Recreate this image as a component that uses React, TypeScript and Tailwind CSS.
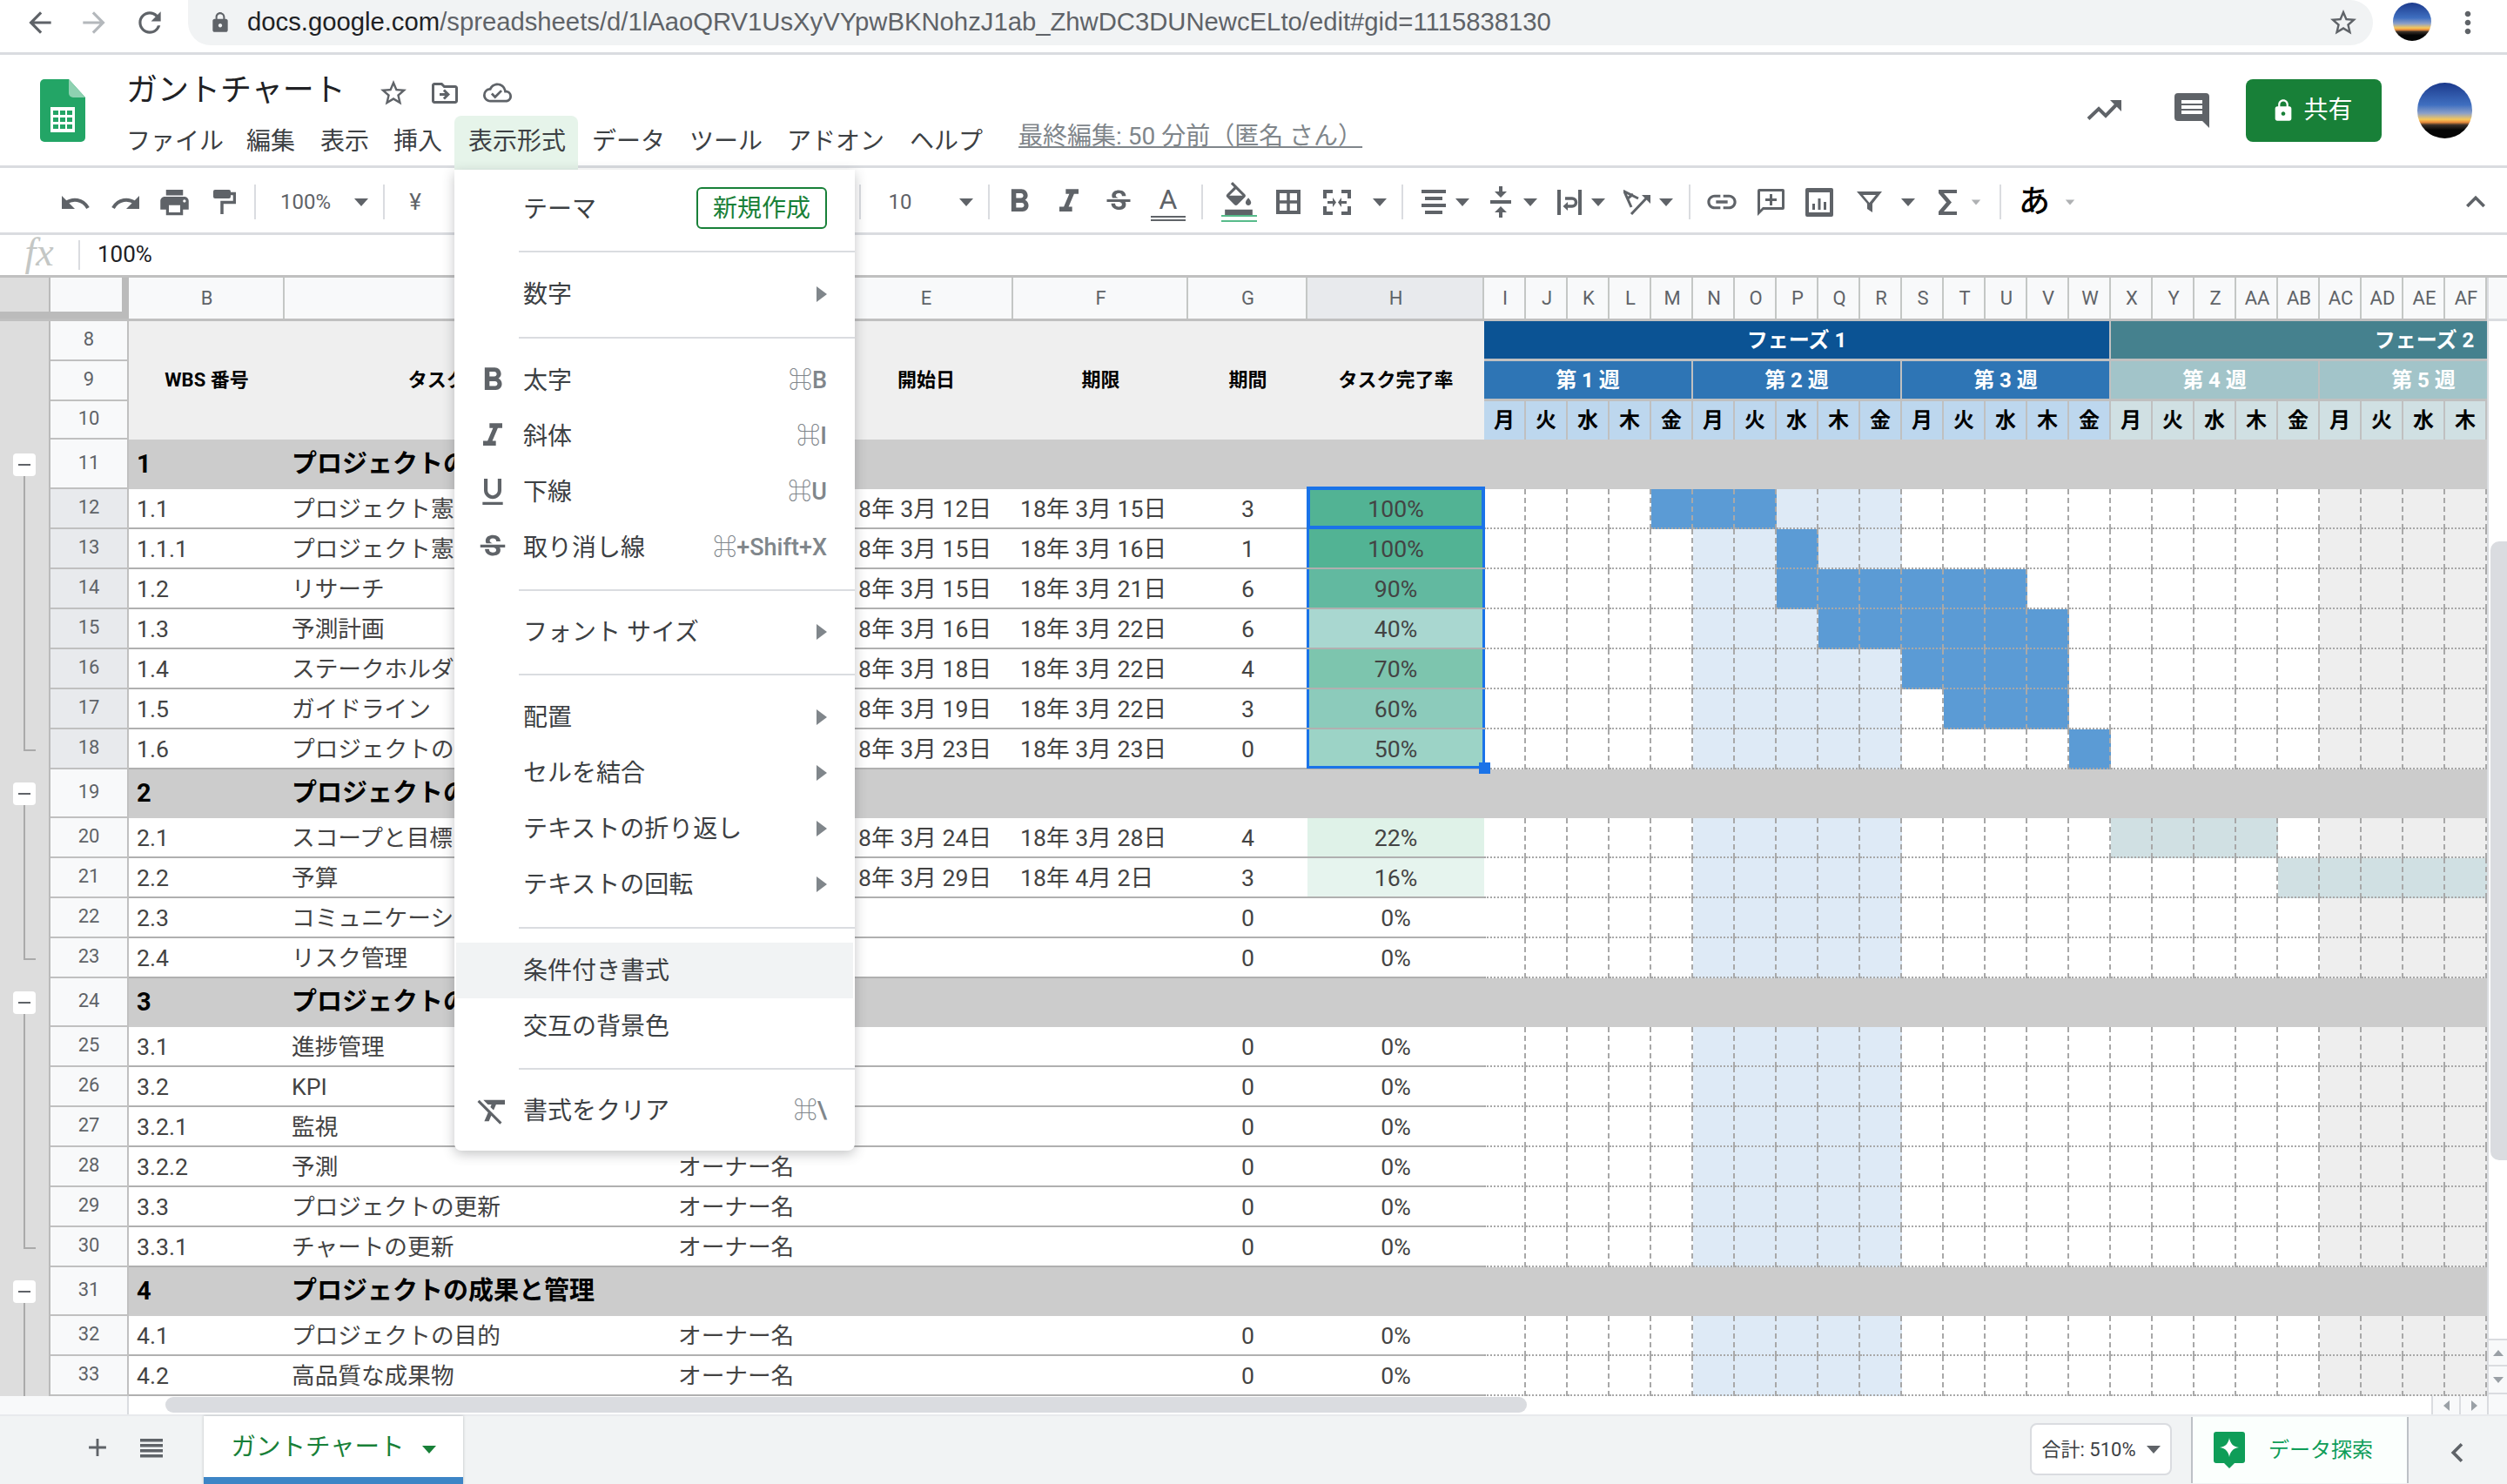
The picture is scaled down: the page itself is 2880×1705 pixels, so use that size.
import React from "react";
import {
  MdArrowBack, MdArrowForward, MdRefresh, MdStarBorder, MdLock, MdMoreVert, MdOutlineDriveFileMove, MdOutlineCloudDone,
  MdPrint, MdFormatBold, MdFormatItalic, MdStrikethroughS,
  MdFormatColorFill, MdLink, MdExpandLess, MdFormatClear, MdAdd, MdChevronLeft, MdFormatUnderlined,
} from "react-icons/md";

const AVATAR = "bg-[linear-gradient(180deg,#1c3a8c_0%,#3f6fc0_40%,#8ca0c8_55%,#f7c85a_66%,#e98c3c_71%,#3a3028_76%,#050505_85%)]";
const GREY = "#5f6368";

function TriDown({ cls = "" }: { cls?: string }) {
  return <span className={"block w-0 h-0 border-x-[8px] border-t-[9px] border-x-transparent border-t-[#5f6368] " + cls} />;
}
function TriRight() {
  return <span className="block w-0 h-0 border-y-[9px] border-l-[12px] border-y-transparent border-l-[#80868b]" />;
}

function Sep({ cls }: { cls: string }) {
  return <div className={"w-[2px] h-[40px] bg-[#dadce0] " + cls} />;
}

function Arrow({ cls, light }: { cls: string; light?: boolean }) {
  return (
    <div className={"w-[18px] flex justify-center " + cls}>
      <TriDown cls={light ? "opacity-50 scale-[0.65]" : ""} />
    </div>
  );
}

function Browser() {
  return (
    <div className="h-[63px] border-b-[3px] border-[#dadce0] bg-white flex items-start">
      <div className="w-[216px] h-[52px] flex items-center text-[#5f6368]">
        <MdArrowBack className="ml-[27px] w-[38px] h-[38px]" />
        <MdArrowForward className="ml-[24px] w-[38px] h-[38px] text-[#b4b8bc]" />
        <MdRefresh className="ml-[26px] w-[38px] h-[38px]" />
      </div>
      <div className="w-[2510px] h-[52px] bg-[#f1f3f4] rounded-r-[26px] rounded-bl-[26px] flex items-center">
        <MdLock className="ml-[24px] w-[26px] h-[26px] text-[#5f6368]" />
        <div className="ml-[18px] text-[29.25px] [font-family:'Liberation_Sans',sans-serif] text-[#5f6368] whitespace-nowrap">
          <span className="text-[#202124]">docs.google.com</span>/spreadsheets/d/1lAaoQRV1UsXyVYpwBKNohzJ1ab_ZhwDC3DUNewcELto/edit#gid=1115838130
        </div>
        <MdStarBorder className="ml-auto mr-[16px] w-[36px] h-[36px] text-[#5f6368]" />
      </div>
      <div className={"ml-[23px] mt-[3px] w-[44px] h-[44px] rounded-full " + AVATAR} />
      <MdMoreVert className="ml-[22px] mt-[6px] w-[40px] h-[40px] text-[#5f6368]" />
    </div>
  );
}

function Logo() {
  return (
    <svg viewBox="0 0 52 72" className="w-[52px] h-[72px] block">
      <path d="M5 0H33L52 21V67a5 5 0 0 1-5 5H5a5 5 0 0 1-5-5V5a5 5 0 0 1 5-5z" fill="#23a566" />
      <path d="M33 0L52 21H38a5 5 0 0 1-5-5z" fill="#8ed1b1" />
      <rect x="12" y="32" width="28" height="29" fill="#fff" />
      <g fill="#23a566">
        <rect x="15" y="36" width="6" height="5" /><rect x="23" y="36" width="6" height="5" /><rect x="31" y="36" width="6" height="5" />
        <rect x="15" y="44" width="6" height="5" /><rect x="23" y="44" width="6" height="5" /><rect x="31" y="44" width="6" height="5" />
        <rect x="15" y="52" width="6" height="5" /><rect x="23" y="52" width="6" height="5" /><rect x="31" y="52" width="6" height="5" />
      </g>
    </svg>
  );
}

const MENU_BAR = [
  { t: "ファイル", w: "w-[138px]" },
  { t: "編集", w: "w-[85px]" },
  { t: "表示", w: "w-[84px]" },
  { t: "挿入", w: "w-[86px]" },
  { t: "表示形式", w: "w-[142px] bg-[#e6f4ea] rounded-t-[8px]" },
  { t: "データ", w: "w-[112px]" },
  { t: "ツール", w: "w-[112px]" },
  { t: "アドオン", w: "w-[141px]" },
  { t: "ヘルプ", w: "w-[121px]" },
];

function DocHeader() {
  return (
    <div className="h-[130px] bg-white border-b-[3px] border-[#dadce0] flex relative">
      <div className="ml-[46px] mt-[28px] shrink-0"><Logo /></div>
      <div className="ml-[47px] flex flex-col">
        <div className="h-[70px] shrink-0 flex items-center pt-[11px]">
          <span className="text-[36px] text-[#202124] leading-none">ガントチャート</span>
          <MdStarBorder className="ml-[37px] mt-[6px] w-[36px] h-[36px] text-[#5f6368]" />
          <MdOutlineDriveFileMove className="ml-[23px] mt-[6px] w-[36px] h-[36px] text-[#5f6368]" />
          <MdOutlineCloudDone className="ml-[26px] mt-[6px] w-[33px] h-[33px] text-[#5f6368]" />
        </div>
        <div className="-ml-[16px] flex items-center h-[62px] shrink-0 relative z-0">
          {MENU_BAR.map((m) => (
            <div key={m.t} className={"h-[62px] pl-[16px] pb-[2px] flex items-center text-[28px] text-[#3c4043] whitespace-nowrap " + m.w}>
              {m.t}
            </div>
          ))}
          <div className="ml-[20px] -mt-[14px] text-[28px] leading-[36px] text-[#80868b] underline whitespace-nowrap">最終編集: 50 分前（匿名 さん）</div>
        </div>
      </div>
      <div className="ml-auto flex items-start shrink-0">
        <svg viewBox="0 0 40 23" className="mt-[52px] w-[40px] h-[23px]" fill="none">
          <path d="M2 21.5L14 10l8 8L36 3.5" stroke={GREY} strokeWidth="4" />
          <path d="M40 0V13L27 0z" fill={GREY} />
        </svg>
        <svg viewBox="0 0 40 40" className="ml-[61px] mt-[44px] w-[40px] h-[40px]">
          <path d="M4 0h32a4 4 0 0 1 4 4v36l-8-8H4a4 4 0 0 1-4-4V4a4 4 0 0 1 4-4z" fill={GREY} />
          <path d="M8 8h24v4H8zM8 14h24v4H8zM8 20h24v4H8z" fill="#fff" />
        </svg>
        <div className="ml-[42px] mt-[28px] w-[156px] h-[72px] bg-[#188038] rounded-[8px] flex items-center justify-center text-white text-[28px] pr-[4px]">
          <MdLock className="w-[28px] h-[28px] mr-[9px]" />共有
        </div>
        <div className={"ml-[41px] mr-[40px] mt-[32px] w-[63px] h-[64px] rounded-full " + AVATAR} />
      </div>
    </div>
  );
}

function Toolbar() {
  const slot = "flex justify-center items-center text-[#5f6368] ";
  return (
    <div className="h-[77px] pt-[4px] bg-white border-b-[3px] border-[#dadce0] flex items-center">
      <div className={slot + "ml-[58px] w-[57px]"}>
        <svg viewBox="0 0 32 15" className="w-[32px] h-[15px]" fill="none">
          <path d="M0 0V15H15z" fill={GREY} />
          <path d="M5 8C12 3 24 3 30 14" stroke={GREY} strokeWidth="4" />
        </svg>
      </div>
      <div className={slot + "w-[57px]"}>
        <svg viewBox="0 0 32 15" className="w-[32px] h-[15px]" fill="none">
          <path d="M32 0V15H17z" fill={GREY} />
          <path d="M27 8C20 3 8 3 2 14" stroke={GREY} strokeWidth="4" />
        </svg>
      </div>
      <div className={slot + "w-[57px]"}><MdPrint className="w-[39px] h-[39px]" /></div>
      <div className={slot + "w-[57px]"}>
        <svg viewBox="0 0 26 28" className="w-[26px] h-[28px]" fill="none">
          <rect width="20" height="10" rx="2" fill={GREY} />
          <path d="M20 4.5H24.5V14.5H10V28" stroke={GREY} strokeWidth="3.5" />
        </svg>
      </div>
      <Sep cls="ml-[6px]" />
      <div className={slot + "w-[114px] text-[24px]"}>100%</div>
      <Arrow cls="-ml-[2px]" />
      <Sep cls="ml-[16px]" />
      <div className={slot + "w-[70px] text-[26px]"}>¥</div>
      <Sep cls="ml-[475px]" />
      <div className={slot + "w-[90px] text-[24px] text-[#5f6368]"}>10</div>
      <Arrow cls="ml-[22px]" />
      <Sep cls="ml-[16px]" />
      <div className={slot + "w-[68px]"}><MdFormatBold className="w-[44px] h-[44px]" /></div>
      <div className={slot + "w-[46px]"}><MdFormatItalic className="w-[44px] h-[44px]" /></div>
      <div className={slot + "w-[68px]"}><MdStrikethroughS className="w-[36px] h-[36px]" /></div>
      <div className={"w-[46px] flex flex-col items-center text-[#5f6368]"}>
        <span className="text-[32px] leading-[38px]">A</span>
        <span className="w-[40px] h-[6px] border-y-2 border-[#5f6368]" />
      </div>
      <Sep cls="ml-[15px]" />
      <div className="w-[82px] flex flex-col items-center">
        <MdFormatColorFill className="w-[38px] h-[38px] text-[#5f6368]" />
        <span className="w-[41px] h-[8px] border-y-2 border-[#57bb8a]" />
      </div>
      <div className={slot + "w-[32px]"}>
        <svg viewBox="0 0 28 28" className="w-[28px] h-[28px]" fill="none" stroke={GREY}>
          <rect x="2" y="2" width="24" height="24" strokeWidth="4" />
          <path d="M14 2V26M2 14H26" strokeWidth="3.5" />
        </svg>
      </div>
      <div className={slot + "w-[80px]"}>
        <svg viewBox="0 0 32 29" className="w-[32px] h-[29px]" fill={GREY}>
          <path d="M0 0h11v4H4v6H0zM21 0h11v10h-4V4h-7zM0 19h4v6h7v4H0zM28 19h4v10H21v-4h7zM5 13h6V9l4 5.5-4 5.5v-4H5zM27 13h-6V9l-4 5.5 4 5.5v-4h6z" />
        </svg>
      </div>
      <Arrow cls="" />
      <Sep cls="ml-[16px]" />
      <div className={slot + "ml-[19px] w-[32px]"}>
        <svg viewBox="0 0 28 28" className="w-[28px] h-[28px]" fill={GREY}>
          <path d="M0 0h28v4H0zM4 8h20v4H4zM0 16h28v4H0zM4 24h20v4H4z" />
        </svg>
      </div>
      <Arrow cls="ml-[8px]" />
      <div className={slot + "ml-[19px] w-[32px]"}>
        <svg viewBox="0 0 24 36" className="w-[24px] h-[36px]" fill={GREY}>
          <path d="M10 0h4v6h5l-7 7-7-7h5zM0 16h24v4H0zM12 23l7 7h-5v6h-4v-6H5z" />
        </svg>
      </div>
      <Arrow cls="ml-[9px]" />
      <div className={slot + "ml-[20px] w-[32px]"}>
        <svg viewBox="0 0 28 29" className="w-[28px] h-[29px]" fill="none">
          <path d="M0 0h4v29H0zM24 0h4v29h-4z" fill={GREY} />
          <path d="M9 10h8a4.5 4.5 0 0 1 0 9h-6" stroke={GREY} strokeWidth="3.5" />
          <path d="M12 14l-5.5 5 5.5 5z" fill={GREY} />
        </svg>
      </div>
      <Arrow cls="ml-[8px]" />
      <div className={slot + "ml-[19px] w-[32px]"}>
        <svg viewBox="0 0 31 29" className="w-[31px] h-[29px]" fill="none" stroke={GREY} strokeWidth="3">
          <path d="M17 10L1 2L9 20M5 10L11 5M9 28L27 9" />
          <path d="M31 6H21l10 10z" fill={GREY} stroke="none" />
        </svg>
      </div>
      <Arrow cls="ml-[9px]" />
      <Sep cls="ml-[17px]" />
      <div className={slot + "ml-[16px] w-[40px]"}><MdLink className="w-[44px] h-[44px]" /></div>
      <div className={slot + "ml-[18px] w-[36px]"}>
        <svg viewBox="0 0 31 31" className="w-[31px] h-[31px]" fill={GREY}>
          <path fillRule="evenodd" d="M2 0h27a2 2 0 0 1 2 2v20a2 2 0 0 1-2 2H7l-7 7V2a2 2 0 0 1 2-2zM3 3v21l3-3h22V3z" />
          <path d="M14 6h3v5h5v3h-5v5h-3v-5H9v-3h5z" />
        </svg>
      </div>
      <div className={slot + "ml-[20px] w-[36px]"}>
        <svg viewBox="0 0 32 33" className="w-[32px] h-[33px]" fill={GREY}>
          <path fillRule="evenodd" d="M2 0h28a2 2 0 0 1 2 2v29a2 2 0 0 1-2 2H2a2 2 0 0 1-2-2V2a2 2 0 0 1 2-2zM4 5v23h24V5z" />
          <path d="M8 18h3v7H8zM14.5 12h3v13h-3zM21 16h3v9h-3z" />
        </svg>
      </div>
      <div className={slot + "ml-[21px] w-[36px]"}>
        <svg viewBox="0 0 29 24" className="w-[29px] h-[24px]" fill={GREY}>
          <path fillRule="evenodd" d="M0 0H29L18 14V24L12 20V14zM7 4L14.5 13L22 4z" />
        </svg>
      </div>
      <Arrow cls="ml-[18px]" />
      <div className={slot + "ml-[20px] w-[32px]"}>
        <svg viewBox="0 0 21 29" className="w-[21px] h-[29px]" fill={GREY}>
          <path d="M0 0h21v4H6l9 10.5L6 25h15v4H0v-4l9-10.5L0 4z" />
        </svg>
      </div>
      <Arrow cls="ml-[8px]" light />
      <Sep cls="ml-[18px]" />
      <div className="ml-[18px] w-[40px] text-center text-[36px] font-medium text-black leading-none">あ</div>
      <Arrow cls="ml-[12px]" light />
      <MdExpandLess className="ml-auto mr-[14px] w-[44px] h-[44px] text-[#5f6368]" />
    </div>
  );
}

function FormulaBar() {
  return (
    <div className="h-[49px] bg-white border-b-[3px] border-[#c0c0c0] flex items-center">
      <div className="w-[90px] pb-[6px] text-center text-[46px] italic text-[#c4c7c5] [font-family:'Liberation_Serif',serif] leading-none">fx</div>
      <div className="w-[2px] h-[34px] bg-[#dadce0]" />
      <div className="ml-[20px] pb-[2px] text-[26px] text-[#202124]">100%</div>
    </div>
  );
}

const colHead = "h-full pl-[2px] flex items-center justify-center border-r-2 border-[#c4c7c5] text-[22px] text-[#5f6368]";

function ColumnHeader() {
  const letters = "I J K L M N O P Q R S T U V W X Y Z AA AB AC AD AE AF".split(" ");
  return (
    <div className="h-[50px] flex bg-[#f8f9fa] border-b-[3px] border-[#c0c0c0]">
      <div className="w-[58px] bg-[#dddddd] border-r-2 border-[#bbbbbb] border-b-[8px] box-border" />
      <div className="w-[90px] border-r-[8px] border-b-[8px] border-[#bbbbbb]" />
      <div className={colHead + " w-[179px]"}>B</div>
      <div className={colHead + " w-[443px]"}>C</div>
      <div className={colHead + " w-[194px]"}>D</div>
      <div className={colHead + " w-[200px]"}>E</div>
      <div className={colHead + " w-[201px]"}>F</div>
      <div className={colHead + " w-[137px]"}>G</div>
      <div className={colHead + " w-[203px] bg-[#e8eaed]"}>H</div>
      {letters.map((l) => (
        <div key={l} className={colHead + " w-[48px]"}>{l}</div>
      ))}
    </div>
  );
}

type GutterKind = "none" | "box" | "line" | "end";

function Gutter({ kind }: { kind: GutterKind }) {
  return (
    <div className="w-[58px] shrink-0 h-full bg-[#dddddd] border-r-2 border-[#bbbbbb] relative">
      {kind === "box" && (
        <>
          <div className="absolute left-[27px] top-1/2 bottom-0 w-[2px] bg-[#aaaaaa]" />
          <div className="absolute left-[15px] top-1/2 -translate-y-1/2 w-[26px] h-[26px] bg-white rounded-[4px] flex items-center justify-center">
            <span className="w-[14px] h-[2px] bg-[#5f6368]" />
          </div>
        </>
      )}
      {kind === "line" && <div className="absolute left-[27px] top-0 bottom-0 w-[2px] bg-[#aaaaaa]" />}
      {kind === "end" && (
        <>
          <div className="absolute left-[27px] top-0 h-1/2 w-[2px] bg-[#aaaaaa]" />
          <div className="absolute left-[27px] top-1/2 w-[14px] h-[2px] bg-[#aaaaaa]" />
        </>
      )}
    </div>
  );
}

function RowNum({ n, active }: { n: number; active?: boolean }) {
  return (
    <div
      className={
        "w-[90px] shrink-0 h-full flex items-center justify-center text-[22px] text-[#5f6368] border-r-2 border-b-2 border-[#c0c0c0] pb-[3px] " +
        (active ? "bg-[#e8eaed]" : "bg-[#f8f9fa]")
      }
    >
      {n}
    </div>
  );
}

const DAYS = ["月", "火", "水", "木", "金"];

function GanttHeader() {
  const days = Array.from({ length: 24 }, (_, i) => DAYS[i % 5]);
  return (
    <div className="w-[1152px] shrink-0 flex flex-col overflow-hidden">
      <div className="h-[46px] flex text-white font-bold text-[24px]">
        <div className="w-[720px] shrink-0 bg-[#0b5394] border-r-2 border-b-[3px] border-[#c0c0c0] flex items-center justify-center">フェーズ 1</div>
        <div className="w-[720px] shrink-0 bg-[#45818e] border-b-[3px] border-[#c0c0c0] flex items-center justify-center">フェーズ 2</div>
      </div>
      <div className="h-[46px] flex text-white font-bold text-[24px]">
        {["第 1 週", "第 2 週", "第 3 週"].map((t) => (
          <div key={t} className="w-[240px] shrink-0 bg-[#2e75b5] border-r-2 border-b-[3px] border-[#c0c0c0] flex items-center justify-center">{t}</div>
        ))}
        {["第 4 週", "第 5 週"].map((t) => (
          <div key={t} className="w-[240px] shrink-0 bg-[#a2c4c9] border-r-2 border-b-[3px] border-[#c0c0c0] flex items-center justify-center">{t}</div>
        ))}
      </div>
      <div className="h-[44px] flex text-black font-bold text-[24px]">
        {days.map((d, i) => (
          <div
            key={i}
            className={
              "w-[48px] shrink-0 border-r-2 border-[#c0c0c0] flex items-center justify-center " +
              (i < 15 ? "bg-[#bdd7ee]" : "bg-[#d0e0e3]")
            }
          >
            {d}
          </div>
        ))}
      </div>
    </div>
  );
}

function HeaderBlock() {
  const h = "h-full pb-[2px] flex items-center justify-center text-[22px] font-bold text-black ";
  return (
    <div className="h-[136px] flex">
      <div className="w-[58px] shrink-0 bg-[#dddddd] border-r-2 border-[#bbbbbb]" />
      <div className="w-[90px] shrink-0 flex flex-col">
        <div className="h-[46px]"><RowNum n={8} /></div>
        <div className="h-[46px]"><RowNum n={9} /></div>
        <div className="h-[44px]"><RowNum n={10} /></div>
      </div>
      <div className="w-[1557px] shrink-0 flex bg-[#efefef]">
        <div className={h + "w-[179px]"}>WBS 番号</div>
        <div className={h + "w-[443px]"}>タスク タイトル</div>
        <div className={h + "w-[194px]"}>タスク オーナー</div>
        <div className={h + "w-[200px]"}>開始日</div>
        <div className={h + "w-[201px]"}>期限</div>
        <div className={h + "w-[137px]"}>期間</div>
        <div className={h + "w-[203px]"}>タスク完了率</div>
      </div>
      <GanttHeader />
    </div>
  );
}

type RowData = {
  n: number;
  b: string;
  c: string;
  d?: string;
  e?: string;
  f?: string;
  g?: string;
  h?: string;
  hc?: string;
  dark?: number[];
  tint?: number[];
  gut: GutterKind;
};

const LIGHT = [5, 6, 7, 8, 9];
const range = (a: number, b: number) => Array.from({ length: b - a + 1 }, (_, i) => a + i);

const ROWS: (RowData | { group: true; n: number; b: string; c: string; h57?: boolean; gut: GutterKind })[] = [
  { group: true, n: 11, b: "1", c: "プロジェクトの概要", h57: true, gut: "box" },
  { n: 12, b: "1.1", c: "プロジェクト憲章", e: "18年 3月 12日", f: "18年 3月 15日", g: "3", h: "100%", hc: "bg-[#52b394]", dark: [4, 5, 6], gut: "line" },
  { n: 13, b: "1.1.1", c: "プロジェクト憲章", e: "18年 3月 15日", f: "18年 3月 16日", g: "1", h: "100%", hc: "bg-[#52b394]", dark: [7], gut: "line" },
  { n: 14, b: "1.2", c: "リサーチ", e: "18年 3月 15日", f: "18年 3月 21日", g: "6", h: "90%", hc: "bg-[#62b9a0]", dark: range(7, 12), gut: "line" },
  { n: 15, b: "1.3", c: "予測計画", e: "18年 3月 16日", f: "18年 3月 22日", g: "6", h: "40%", hc: "bg-[#a9d7d0]", dark: range(8, 13), gut: "line" },
  { n: 16, b: "1.4", c: "ステークホルダー", e: "18年 3月 18日", f: "18年 3月 22日", g: "4", h: "70%", hc: "bg-[#7dc5ae]", dark: range(10, 13), gut: "line" },
  { n: 17, b: "1.5", c: "ガイドライン", e: "18年 3月 19日", f: "18年 3月 22日", g: "3", h: "60%", hc: "bg-[#8ccbbb]", dark: range(11, 13), gut: "line" },
  { n: 18, b: "1.6", c: "プロジェクトの", e: "18年 3月 23日", f: "18年 3月 23日", g: "0", h: "50%", hc: "bg-[#9cd3c6]", dark: [14], gut: "end" },
  { group: true, n: 19, b: "2", c: "プロジェクトの計画", gut: "box" },
  { n: 20, b: "2.1", c: "スコープと目標", e: "18年 3月 24日", f: "18年 3月 28日", g: "4", h: "22%", hc: "bg-[#dff2e8]", tint: range(15, 18), gut: "line" },
  { n: 21, b: "2.2", c: "予算", e: "18年 3月 29日", f: "18年 4月 2日", g: "3", h: "16%", hc: "bg-[#e6f4ee]", tint: range(19, 23), gut: "line" },
  { n: 22, b: "2.3", c: "コミュニケーション", g: "0", h: "0%", gut: "line" },
  { n: 23, b: "2.4", c: "リスク管理", g: "0", h: "0%", gut: "end" },
  { group: true, n: 24, b: "3", c: "プロジェクトの進行", gut: "box" },
  { n: 25, b: "3.1", c: "進捗管理", g: "0", h: "0%", gut: "line" },
  { n: 26, b: "3.2", c: "KPI", g: "0", h: "0%", gut: "line" },
  { n: 27, b: "3.2.1", c: "監視", g: "0", h: "0%", gut: "line" },
  { n: 28, b: "3.2.2", c: "予測", d: "オーナー名", g: "0", h: "0%", gut: "line" },
  { n: 29, b: "3.3", c: "プロジェクトの更新", d: "オーナー名", g: "0", h: "0%", gut: "line" },
  { n: 30, b: "3.3.1", c: "チャートの更新", d: "オーナー名", g: "0", h: "0%", gut: "end" },
  { group: true, n: 31, b: "4", c: "プロジェクトの成果と管理", gut: "box" },
  { n: 32, b: "4.1", c: "プロジェクトの目的", d: "オーナー名", g: "0", h: "0%", gut: "line" },
  { n: 33, b: "4.2", c: "高品質な成果物", d: "オーナー名", g: "0", h: "0%", gut: "line" },
];

function GanttCells({ r }: { r: RowData }) {
  return (
    <div className="flex w-[1152px] shrink-0 h-full">
      {range(0, 23).map((i) => {
        let bg = "bg-white";
        if (i >= 20) bg = "bg-[#eeeeee]";
        if (LIGHT.includes(i)) bg = "bg-[#deeaf6]";
        if (r.tint?.includes(i)) bg = "bg-[#d0e0e3]";
        if (r.dark?.includes(i)) bg = "bg-[#5b9bd5]";
        return (
          <div
            key={i}
            className={"w-[48px] h-full shrink-0 border-r-2 border-b-2 border-dashed border-[#a8a8a8] [border-bottom-style:dotted]! " + bg}
          />
        );
      })}
    </div>
  );
}

function Selection({ n }: { n: number }) {
  if (n === 12) return <div className="absolute -left-[1px] -right-[1px] -top-[3px] -bottom-[2px] border-[4px] border-[#1a73e8]" />;
  return (
    <>
      <div className="absolute -left-[1px] top-0 bottom-0 w-[3px] bg-[#1a73e8]" />
      <div className="absolute -right-[1px] top-0 bottom-0 w-[3px] bg-[#1a73e8]" />
      {n === 18 && (
        <>
          <div className="absolute -left-[1px] -right-[1px] -bottom-[1px] h-[3px] bg-[#1a73e8]" />
          <div className="absolute -right-[7px] -bottom-[7px] w-[13px] h-[13px] bg-[#1a73e8] z-10" />
        </>
      )}
    </>
  );
}

function Row({ r }: { r: (typeof ROWS)[number] }) {
  if ("group" in r) {
    return (
      <div className={"flex " + (r.h57 ? "h-[57px]" : "h-[56px]")}>
        <Gutter kind={r.gut} />
        <RowNum n={r.n} />
        <div className="flex-1 h-full bg-[#cccccc] flex items-center text-[29px] font-bold text-black whitespace-nowrap">
          <div className="w-[179px] pl-[9px]">{r.b}</div>
          <div className="pl-[8px]">{r.c}</div>
        </div>
      </div>
    );
  }
  const c = "h-full pt-[2px] border-b-2 border-[#b0b0b0] flex items-center overflow-hidden whitespace-nowrap shrink-0 ";
  return (
    <div className="flex h-[46px] text-[26.67px] text-[#434343]">
      <Gutter kind={r.gut} />
      <RowNum n={r.n} active={r.n >= 12 && r.n <= 18} />
      <div className={c + "w-[179px] pl-[9px] bg-white"}>{r.b}</div>
      <div className={c + "w-[443px] pl-[8px] bg-white"}>{r.c}</div>
      <div className={c + "w-[194px] pl-[9px] bg-white"}>{r.d}</div>
      <div className={c + "w-[200px] pl-[7px] bg-white"}>{r.e}</div>
      <div className={c + "w-[201px] pl-[8px] bg-white"}>{r.f}</div>
      <div className={c + "w-[137px] justify-center bg-white"}>{r.g}</div>
      <div className={"h-[46px] pt-[2px] border-b-2 border-[#b0b0b0] w-[203px] shrink-0 flex items-center justify-center relative " + (r.hc ?? "bg-white")}>
        {r.h}
        {r.n >= 12 && r.n <= 18 && <Selection n={r.n} />}
      </div>
      <GanttCells r={r} />
    </div>
  );
}

function HStrip() {
  return (
    <div className="h-[21px] flex bg-white">
      <div className="w-[148px] bg-[#f8f9fa] border-r-2 border-[#dadce0]" />
      <div className="ml-[42px] mt-[1px] w-[1564px] h-[18px] bg-[#dadce0] rounded-[9px]" />
      <div className="ml-auto w-[32px] border-l-2 border-[#dadce0] flex items-center justify-center bg-[#f8f9fa]">
        <span className="w-0 h-0 border-y-[6px] border-r-[7px] border-y-transparent border-r-[#9aa0a6]" />
      </div>
      <div className="w-[32px] border-l-2 border-[#dadce0] flex items-center justify-center bg-[#f8f9fa]">
        <span className="w-0 h-0 border-y-[6px] border-l-[7px] border-y-transparent border-l-[#9aa0a6]" />
      </div>
    </div>
  );
}

function VScroll() {
  return (
    <div className="w-[23px] shrink-0 flex flex-col border-l-2 border-[#dadce0] bg-white">
      <div className="h-[50px] bg-[#f8f9fa] border-b-[3px] border-[#dadce0]" />
      <div className="mt-[253px] ml-[2px] h-[711px] bg-[#dadce0] rounded-l-[10px]" />
      <div className="mt-[205px] h-[32px] border-y-2 border-[#dadce0] bg-[#f8f9fa] flex items-center justify-center">
        <span className="w-0 h-0 border-x-[6px] border-b-[7px] border-x-transparent border-b-[#9aa0a6]" />
      </div>
      <div className="h-[32px] border-b-2 border-[#dadce0] bg-[#f8f9fa] flex items-center justify-center">
        <span className="w-0 h-0 border-x-[6px] border-t-[7px] border-x-transparent border-t-[#9aa0a6]" />
      </div>
      <div className="flex-1 bg-[#f8f9fa]" />
    </div>
  );
}

function Grid() {
  return (
    <div className="h-[1306px] flex overflow-hidden">
      <div className="w-[2857px] shrink-0 flex flex-col">
        <ColumnHeader />
        <HeaderBlock />
        {ROWS.map((r) => <Row key={r.n} r={r} />)}
        <HStrip />
      </div>
      <VScroll />
    </div>
  );
}

function BottomBar() {
  return (
    <div className="h-[80px] bg-[#f1f3f4] border-t-[2px] border-[#e8eaed] flex items-start">
      <MdAdd className="ml-[95px] mt-[19px] w-[34px] h-[34px] text-[#5f6368]" />
      <svg viewBox="0 0 26 22" className="ml-[32px] mt-[26px] w-[26px] h-[22px]" fill={GREY}>
        <path d="M0 0h26v3.5H0zM0 6h26v3.5H0zM0 12h26v3.5H0zM0 18h26v3.5H0z" />
      </svg>
      <div className="ml-[47px] w-[298px] h-[78px] pt-[2px] bg-white border-b-[8px] border-[#3d85c6] flex items-center justify-center text-[#188038] text-[28.5px] shadow-[0_0_3px_rgba(60,64,67,0.3)]">
        ガントチャート
        <TriDown cls="ml-[20px] mt-[4px] border-t-[#188038]" />
      </div>
      <div className="ml-auto mt-[8px] w-[163px] h-[60px] bg-white border-2 border-[#dadce0] rounded-[8px] flex items-center justify-center text-[22px] text-[#3c4043]">
        合計: 510%
        <TriDown cls="ml-[12px]" />
      </div>
      <div className="ml-[22px] mt-[1px] w-[250px] h-[76px] bg-[#fbfffd] border-x-2 border-[#bdc1c6] flex items-center">
        <svg viewBox="0 0 36 42" className="ml-[24px] w-[36px] h-[42px]">
          <path d="M3 0H33a3 3 0 0 1 3 3V33a3 3 0 0 1-3 3H24L18 42 12 36H3a3 3 0 0 1-3-3V3a3 3 0 0 1 3-3z" fill="#0f9d58" />
          <path d="M18 7c1 6 4 10 11 11-7 1-10 5-11 11-1-6-4-10-11-11 7-1 10-5 11-11z" fill="#fff" />
        </svg>
        <span className="ml-[27px] text-[24px] text-[#0f9d58]">データ探索</span>
      </div>
      <MdChevronLeft className="ml-[34px] mr-[35px] mt-[20px] w-[44px] h-[44px] text-[#5f6368]" />
    </div>
  );
}

type MI = { t: string; icon?: React.ReactNode; sc?: string; arrow?: boolean; hl?: boolean; sepAfter?: string };

const icn = "w-[44px] h-[44px] text-[#5f6368]";
const MENU: MI[] = [
  { t: "数字", arrow: true, sepAfter: "h-[35px]" },
  { t: "太字", icon: <MdFormatBold className={icn} />, sc: "⌘B" },
  { t: "斜体", icon: <MdFormatItalic className={icn} />, sc: "⌘I" },
  { t: "下線", icon: <MdFormatUnderlined className="w-[40px] h-[40px] text-[#5f6368]" />, sc: "⌘U" },
  { t: "取り消し線", icon: <MdStrikethroughS className="w-[38px] h-[38px] text-[#5f6368]" />, sc: "⌘+Shift+X", sepAfter: "h-[33px]" },
  { t: "フォント サイズ", arrow: true, sepAfter: "h-[34px]" },
  { t: "配置", arrow: true },
  { t: "セルを結合", arrow: true },
  { t: "テキストの折り返し", arrow: true },
  { t: "テキストの回転", arrow: true, sepAfter: "h-[35px]" },
  { t: "条件付き書式", hl: true },
  { t: "交互の背景色", sepAfter: "h-[33px]" },
  { t: "書式をクリア", icon: <MdFormatClear className="w-[42px] h-[42px] text-[#5f6368]" />, sc: "⌘\\" },
];

function MenuSep({ cls }: { cls: string }) {
  return (
    <div className={"flex items-center pl-[74px] " + cls}>
      <div className="w-full h-[2px] bg-[#dadce0]" />
    </div>
  );
}

function FormatMenu() {
  return (
    <div className="absolute left-[522px] top-[195px] w-[460px] pt-[12px] pb-[14px] bg-white rounded-b-[8px] shadow-[0_4px_14px_rgba(60,64,67,0.3)] text-[28px] text-[#3c4043] z-20">
      <div className="h-[64px] flex items-center pl-[79px] pr-[32px]">
        <span className="pt-[3px]">テーマ</span>
        <div className="ml-auto w-[150px] h-[48px] pt-[2px] border-2 border-[#188038] rounded-[6px] flex items-center justify-center text-[#188038] text-[28px]">新規作成</div>
      </div>
      <MenuSep cls="h-[35px]" />
      {MENU.map((m) => (
        <React.Fragment key={m.t}>
          <div className={"h-[64px] flex items-center pr-[30px] mx-[2px] " + (m.hl ? "bg-[#f1f3f4]" : "")}>
            <div className="w-[77px] pl-[20px] shrink-0"><div className="w-[44px] flex justify-center">{m.icon}</div></div>
            <span className="whitespace-nowrap pt-[2px]">{m.t}</span>
            {m.sc && <span className="ml-auto text-[27px] font-medium text-[#80868b]">{m.sc}</span>}
            {m.arrow && <span className="ml-auto"><TriRight /></span>}
          </div>
          {m.sepAfter && <MenuSep cls={m.sepAfter} />}
        </React.Fragment>
      ))}
    </div>
  );
}

export default function App() {
  return (
    <div className="w-[2880px] h-[1705px] relative overflow-hidden bg-white [font-family:Roboto,'Noto_Sans_CJK_JP',sans-serif]">
      <Browser />
      <DocHeader />
      <Toolbar />
      <FormulaBar />
      <Grid />
      <BottomBar />
      <FormatMenu />
    </div>
  );
}
